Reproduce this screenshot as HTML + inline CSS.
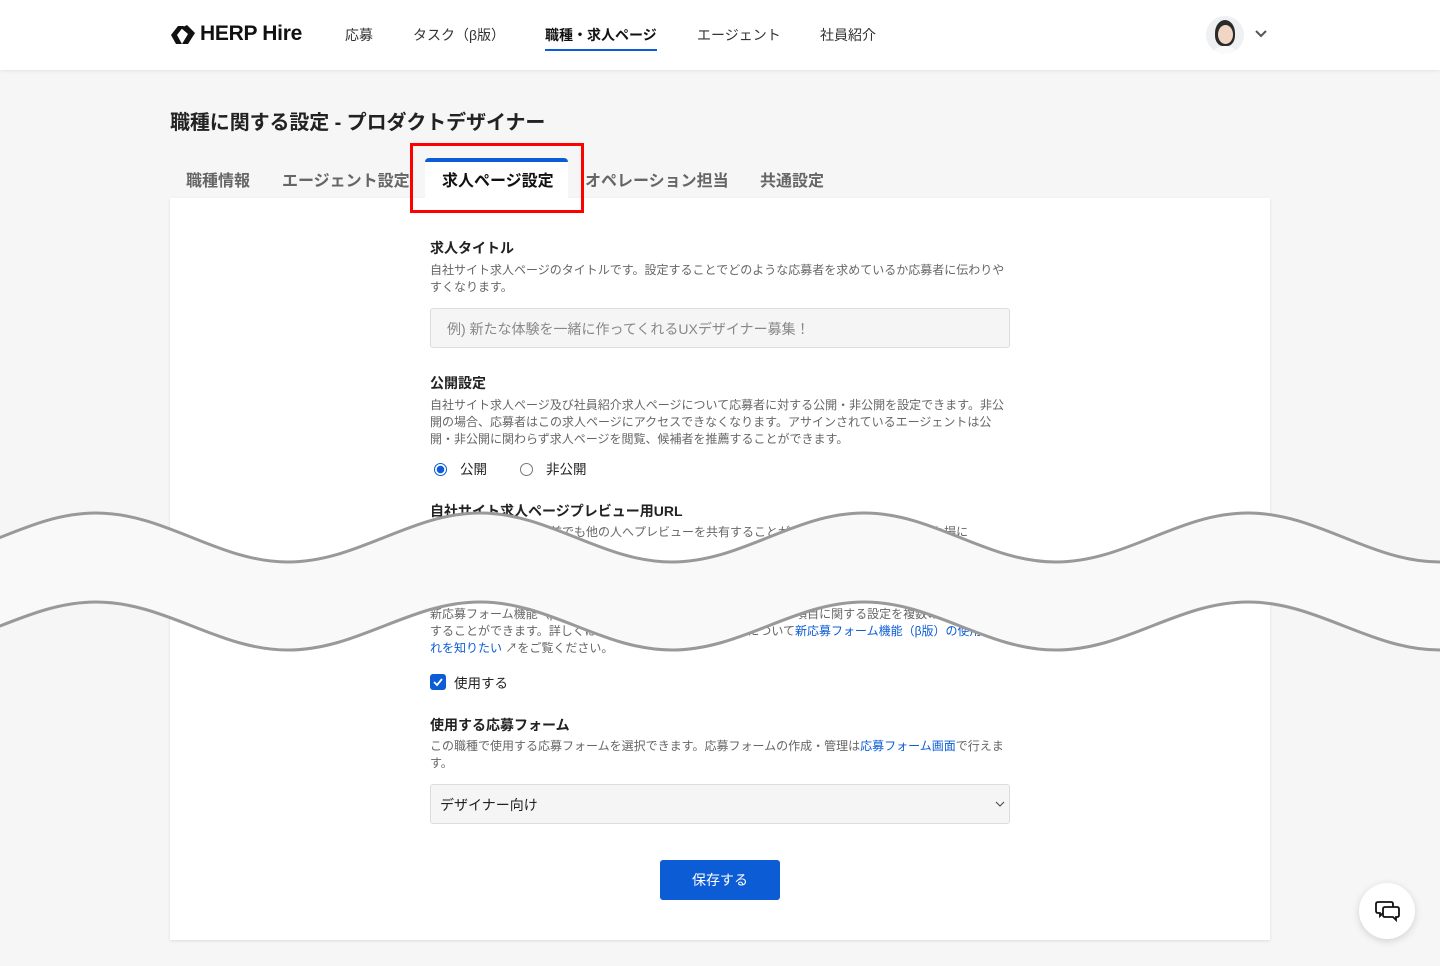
<!DOCTYPE html>
<html><head><meta charset="utf-8">
<style>
*{box-sizing:border-box;margin:0;padding:0}
body{width:1440px;height:966px;overflow:hidden;background:#f6f6f6;font-family:"Liberation Sans","Noto Sans CJK JP",sans-serif;color:#222;position:relative}
.hdr{position:absolute;left:0;top:0;width:1440px;height:70px;background:#fff;box-shadow:0 1px 4px rgba(0,0,0,.08)}
.nav{position:absolute;top:25px;font-size:14px;color:#333}
.abs{position:absolute}
.h1{left:170px;top:106px;font-size:20px;font-weight:bold;letter-spacing:-0.1px}
.tab{position:absolute;top:167px;font-size:16px;font-weight:bold;color:#666}
.card{position:absolute;left:170px;top:198px;width:1100px;height:742px;background:#fff;box-shadow:0 1px 3px rgba(0,0,0,.1)}
.lbl{position:absolute;left:430px;font-size:14px;font-weight:bold;color:#222}
.desc{position:absolute;left:430px;width:580px;font-size:12px;line-height:17px;color:#666}
.inp{position:absolute;left:430px;width:580px;height:40px;background:#f5f5f5;border:1px solid #ddd;border-radius:3px;font-size:14px}
a{color:#0b5cd5;text-decoration:none}
</style></head><body>
<div class="hdr">
  <svg class="abs" style="left:170px;top:24px" width="26" height="22" viewBox="0 0 26 22"><path d="M1 11 L8 2 L14 2 L7 11 L12 20 L6 20 Z" fill="#111"/><path d="M11 4 L17 1 L25 9 L18 20 L12 20 L18 10 Z" fill="#111"/></svg>
  <div class="abs" style="left:200px;top:22px;font-size:21px;font-weight:bold;color:#111;letter-spacing:-0.3px">HERP Hire</div>
  <div class="nav" style="left:345px">応募</div>
  <div class="nav" style="left:413px">タスク（β版）</div>
  <div class="nav" style="left:545px;font-weight:bold;color:#111;border-bottom:2px solid #0b5cd5;padding-bottom:4px">職種・求人ページ</div>
  <div class="nav" style="left:697px">エージェント</div>
  <div class="nav" style="left:820px">社員紹介</div>
  <div class="abs" style="left:1206px;top:16px;width:38px;height:38px;border-radius:50%;background:#eef0f2;overflow:hidden">
    <div class="abs" style="left:9px;top:4px;width:20px;height:26px;border-radius:50% 50% 40% 40%;background:#2a2a2a"></div>
    <div class="abs" style="left:12px;top:9px;width:15px;height:19px;border-radius:50%;background:#f1d6c4"></div>
    <div class="abs" style="left:8px;top:30px;width:22px;height:12px;border-radius:50% 50% 0 0;background:#fafafa"></div>
  </div>
  <svg class="abs" style="left:1254px;top:29px" width="14" height="10" viewBox="0 0 14 10"><path d="M2 2 L7 7 L12 2" stroke="#555" stroke-width="2" fill="none"/></svg>
</div>
<div class="abs h1">職種に関する設定 - プロダクトデザイナー</div>
<div class="card"></div>
<div class="tab" style="left:186px">職種情報</div>
<div class="tab" style="left:282px">エージェント設定</div>
<div class="abs" style="left:425px;top:158px;width:143px;height:42px;background:#fff;border-top:4px solid #0b5cd5;border-radius:4px 4px 0 0"></div>
<div class="tab" style="left:442px;color:#111">求人ページ設定</div>
<div class="tab" style="left:585px">オペレーション担当</div>
<div class="tab" style="left:760px">共通設定</div>
<div class="abs" style="left:410px;top:143px;width:174px;height:70px;border:3px solid #f00"></div>

<div class="lbl" style="top:238px">求人タイトル</div>
<div class="desc" style="top:262px">自社サイト求人ページのタイトルです。設定することでどのような応募者を求めているか応募者に伝わりやすくなります。</div>
<div class="inp" style="top:308px;color:#888;padding:10px 16px">例) 新たな体験を一緒に作ってくれるUXデザイナー募集！</div>
<div class="lbl" style="top:373px">公開設定</div>
<div class="desc" style="top:397px">自社サイト求人ページ及び社員紹介求人ページについて応募者に対する公開・非公開を設定できます。非公開の場合、応募者はこの求人ページにアクセスできなくなります。アサインされているエージェントは公開・非公開に関わらず求人ページを閲覧、候補者を推薦することができます。</div>
<div class="abs" style="left:434px;top:463px;width:13px;height:13px;border-radius:50%;border:1px solid #0b5cd5;background:radial-gradient(circle,#0b5cd5 0 3.5px,#fff 4px)"></div>
<div class="abs" style="left:460px;top:458px;font-size:13.5px">公開</div>
<div class="abs" style="left:520px;top:463px;width:13px;height:13px;border-radius:50%;border:1px solid #777;background:#fff"></div>
<div class="abs" style="left:546px;top:458px;font-size:13.5px">非公開</div>
<div class="lbl" style="top:501px">自社サイト求人ページプレビュー用URL</div>
<div class="desc" style="top:524px;white-space:nowrap">このURLを使うと公開前でも他の人へプレビューを共有することができます。URLはオープンな場に</div>
<div class="desc" style="top:606px">新応募フォーム機能（β版）を使用すると、応募者に入力してもらう項目に関する設定を複数の職種で流用することができます。詳しくは新応募フォーム機能（β版）について<a>新応募フォーム機能（β版）の使用の流れを知りたい</a> ↗をご覧ください。</div>
<div class="abs" style="left:430px;top:674px;width:16px;height:16px;border-radius:3px;background:#0b5cd5"><svg width="16" height="16"><path d="M4 8 L7 11 L12 5" stroke="#fff" stroke-width="1.8" fill="none"/></svg></div>
<div class="abs" style="left:454px;top:672px;font-size:13.5px">使用する</div>
<div class="lbl" style="top:715px">使用する応募フォーム</div>
<div class="desc" style="top:738px">この職種で使用する応募フォームを選択できます。応募フォームの作成・管理は<a>応募フォーム画面</a>で行えます。</div>
<div class="inp" style="top:784px;color:#222;padding:10px 9px">デザイナー向け<svg style="position:absolute;right:4px;top:15px" width="10" height="8"><path d="M1 2 L5 6 L9 2" stroke="#444" fill="none"/></svg></div>
<div class="abs" style="left:660px;top:860px;width:120px;height:40px;background:#0b5cd5;border-radius:3px;color:#fff;font-size:14px;text-align:center;line-height:40px">保存する</div>
<div class="abs" style="left:1359px;top:883px;width:56px;height:56px;border-radius:50%;background:#fff;box-shadow:0 2px 8px rgba(0,0,0,.15)">
<svg style="position:absolute;left:15px;top:16px" width="28" height="24" viewBox="0 0 28 24"><path d="M4 3 H17 Q19 3 19 5 V12 Q19 14 17 14 H9 L6 17 V14 H4 Q2 14 2 12 V5 Q2 3 4 3 Z" fill="#fff" stroke="#111" stroke-width="1.8"/><path d="M11 8 H23 Q25 8 25 10 V16 Q25 18 23 18 H22 V21 L19 18 H11 Q9 18 9 16 V10 Q9 8 11 8 Z" fill="#fff" stroke="#111" stroke-width="1.8"/></svg></div>

<svg class="abs" style="left:0;top:0" width="1440" height="966">
<path d="M-96 562 C-26 562 26 513 96 513 C166 513 218 562 288 562 C358 562 410 513 480 513 C550 513 602 562 672 562 C742 562 794 513 864 513 C934 513 986 562 1056 562 C1126 562 1178 513 1248 513 C1318 513 1370 562 1440 562 C1510 562 1562 513 1632 513 L1632 602 C1562 602 1510 650 1440 650 C1370 650 1318 602 1248 602 C1178 602 1126 650 1056 650 C986 650 934 602 864 602 C794 602 742 650 672 650 C602 650 550 602 480 602 C410 602 358 650 288 650 C218 650 166 602 96 602 C26 602 -26 650 -96 650 Z" fill="#f9f9f9"/>
<path d="M-96 562 C-26 562 26 513 96 513 C166 513 218 562 288 562 C358 562 410 513 480 513 C550 513 602 562 672 562 C742 562 794 513 864 513 C934 513 986 562 1056 562 C1126 562 1178 513 1248 513 C1318 513 1370 562 1440 562 C1510 562 1562 513 1632 513" fill="none" stroke="#999" stroke-width="3"/>
<path d="M-96 650 C-26 650 26 602 96 602 C166 602 218 650 288 650 C358 650 410 602 480 602 C550 602 602 650 672 650 C742 650 794 602 864 602 C934 602 986 650 1056 650 C1126 650 1178 602 1248 602 C1318 602 1370 650 1440 650 C1510 650 1562 602 1632 602" fill="none" stroke="#999" stroke-width="3"/>
</svg>
</body></html>
